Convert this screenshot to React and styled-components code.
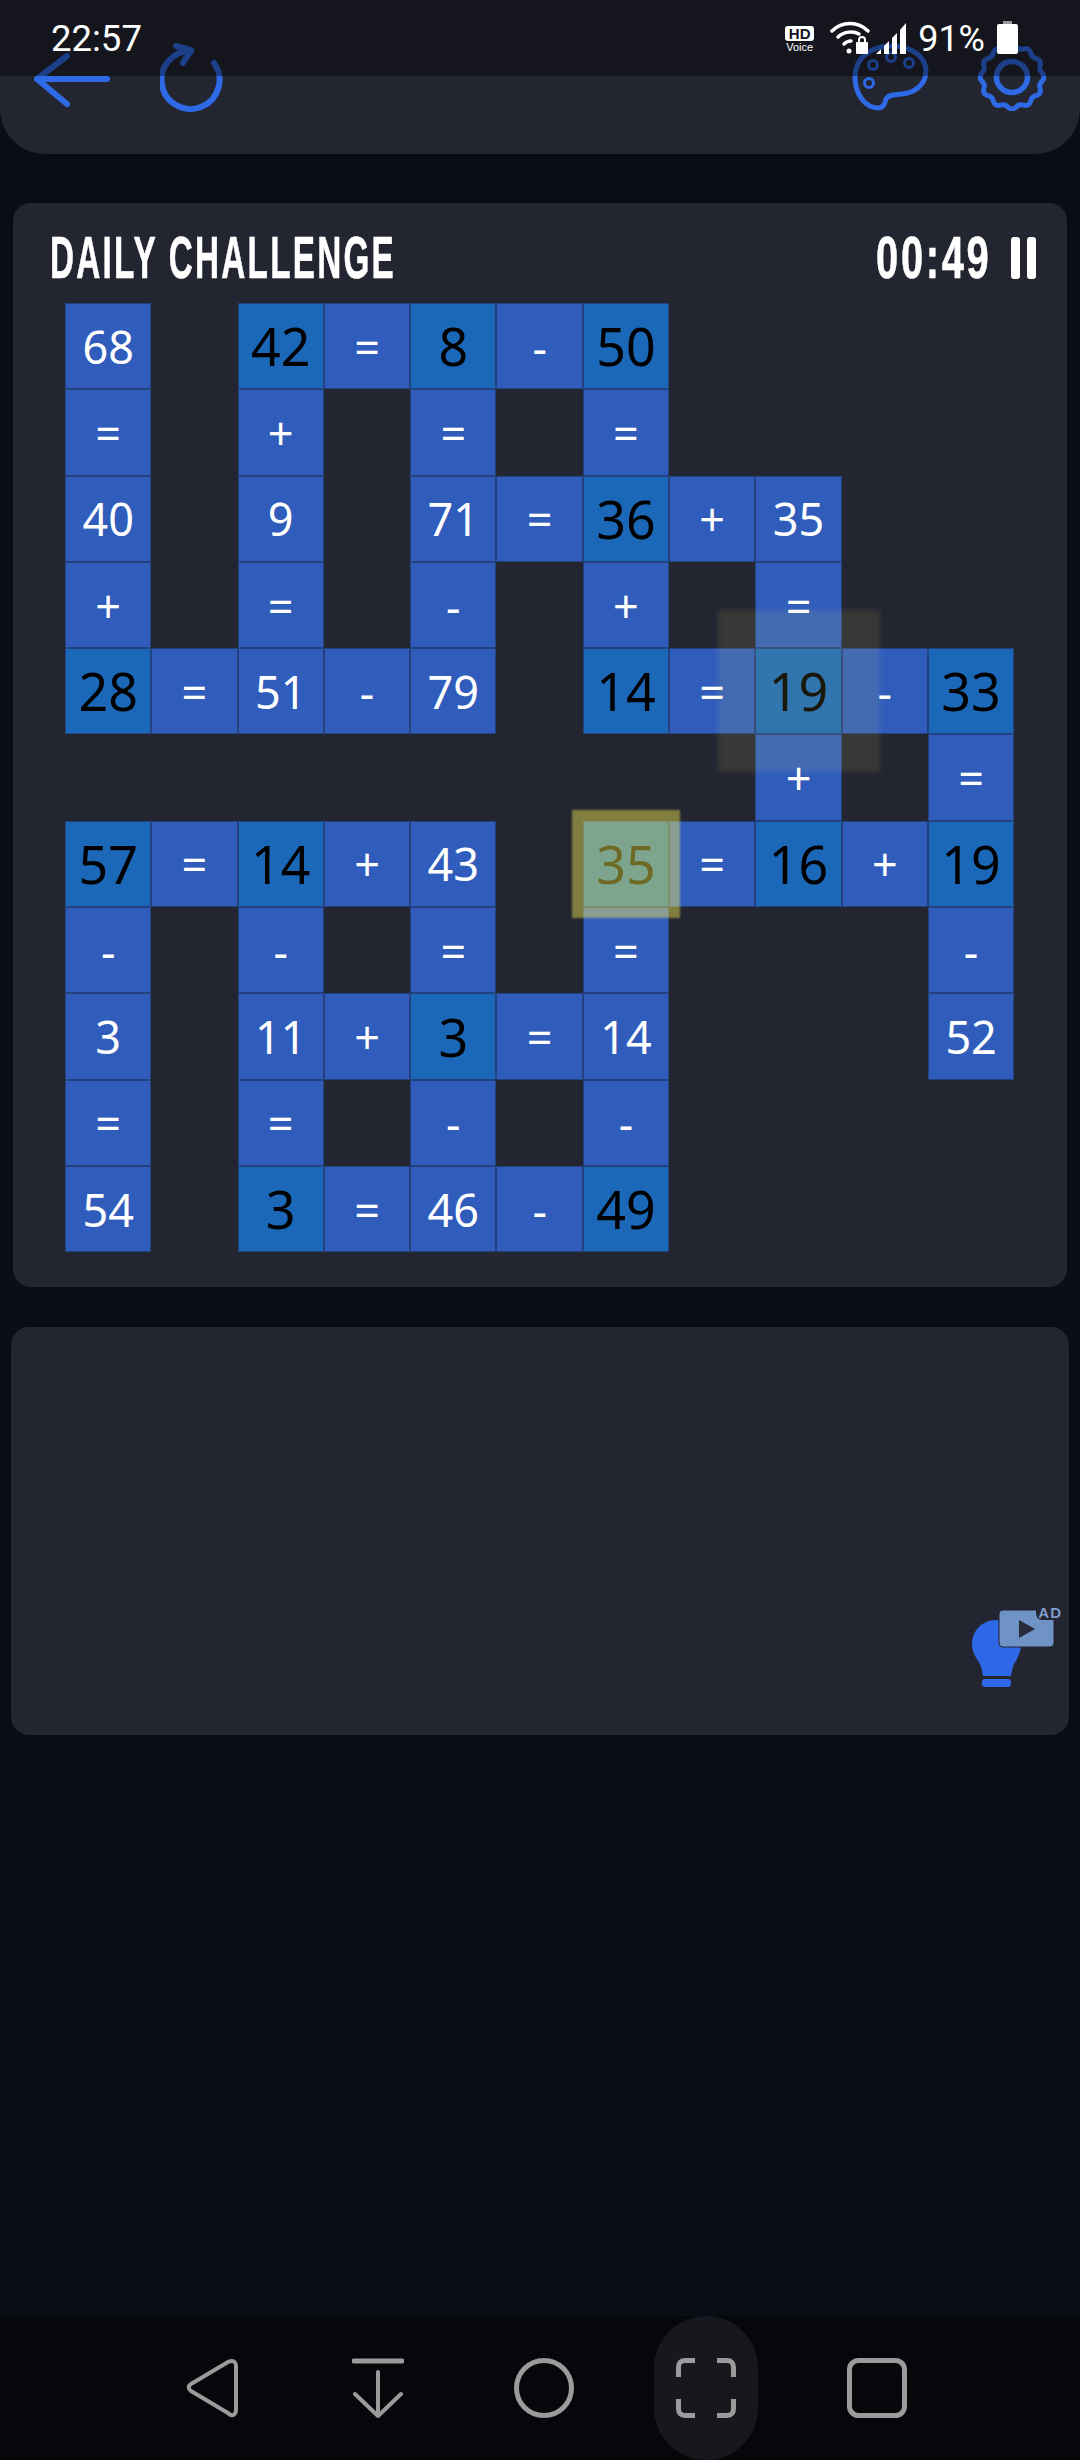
import React from 'react'
import styled, { createGlobalStyle } from 'styled-components'

const Global = createGlobalStyle`
  html, body { margin: 0; padding: 0; background: #0a0d15; }
`

const PITCH = 86.3

const board = [
  ['68', '', '42*', '=', '8*', '-', '50*', '', '', '', ''],
  ['=', '', '+', '', '=', '', '=', '', '', '', ''],
  ['40', '', '9', '', '71', '=', '36*', '+', '35', '', ''],
  ['+', '', '=', '', '-', '', '+', '', '=', '', ''],
  ['28*', '=', '51', '-', '79', '', '14*', '=', '19*', '-', '33*'],
  ['', '', '', '', '', '', '', '', '+', '', '='],
  ['57*', '=', '14*', '+', '43', '', '35*', '=', '16*', '+', '19*'],
  ['-', '', '-', '', '=', '', '=', '', '', '', '-'],
  ['3', '', '11', '+', '3*', '=', '14', '', '', '', '52'],
  ['=', '', '=', '', '-', '', '-', '', '', '', ''],
  ['54', '', '3*', '=', '46', '-', '49*', '', '', '', ''],
]

const Page = styled.div`
  position: relative;
  width: 1080px;
  height: 2460px;
  overflow: hidden;
  display: flex;
  flex-direction: column;
  background: #0a0d15;
  font-family: "Noto Sans", sans-serif;
`

const StatusBar = styled.div`
  position: absolute;
  top: 0;
  left: 0;
  right: 0;
  height: 76px;
  background: rgba(0, 0, 0, 0.4);
  display: flex;
  justify-content: space-between;
  padding: 0 62px 0 51px;
  box-sizing: border-box;
  color: #fff;
  font-family: Roboto, sans-serif;
`

const Clock = styled.div`
  font-size: 36.5px;
  line-height: 42px;
  margin-top: 18px;
`

const StatusRight = styled.div`
  display: flex;
  align-items: flex-start;
  padding-top: 21px;
`

const Battery = styled.div`
  font-size: 36px;
  line-height: 42px;
  margin: -3px 12px 0 9px;
`

const HdBadge = styled.div`
  width: 29px;
  margin: 5px 14px 0 0;
  display: flex;
  flex-direction: column;
  align-items: center;
`

const HdMark = styled.div`
  width: 29px;
  height: 15px;
  border-radius: 3px;
  background: #fff;
  color: #14151f;
  font: 700 15px/15px "Liberation Sans", sans-serif;
  text-align: center;
`

const VoiceMark = styled.div`
  font: 400 11px/12px "Liberation Sans", sans-serif;
  color: #fff;
`

const Header = styled.header`
  height: 154px;
  flex: none;
  box-sizing: border-box;
  padding: 43px 34px 0;
  display: flex;
  justify-content: space-between;
  background: #232531;
  border-radius: 0 0 45px 45px;
`

const IconGroup = styled.div`
  display: flex;
  align-items: flex-start;
  gap: ${p => p.$gap}px;
`

const BlueIcon = styled.svg`
  display: block;
  margin-top: ${p => p.$top || 0}px;
  fill: none;
  stroke: #2f6ae6;
  stroke-width: 6;
  stroke-linecap: round;
  stroke-linejoin: round;
`

const Panel = styled.section`
  background: #232531;
  border-radius: 18px;
  margin: ${p => p.$margin};
`

const GamePanel = styled(Panel)`
  height: 1084px;
  padding: 19px 31px 0 37px;
  box-sizing: border-box;
`

const TitleRow = styled.div`
  display: flex;
  justify-content: space-between;
  align-items: center;
  height: 81px;
  padding-bottom: 9px;
  box-sizing: border-box;
  color: #fff;
`

const Title = styled.h1`
  margin: 0;
  font: 700 60px/74px "Liberation Sans", sans-serif;
  letter-spacing: 4px;
  transform: scaleX(0.555);
  transform-origin: left center;
  white-space: nowrap;
  -webkit-text-stroke: 0.6px #fff;
`

const Timer = styled.div`
  display: flex;
  align-items: center;
  gap: 20px;
`

const TimeText = styled.div`
  font: 700 60px/74px "Liberation Sans", sans-serif;
  letter-spacing: 4px;
  transform: scaleX(0.665);
  transform-origin: right center;
  -webkit-text-stroke: 0.6px #fff;
`

const PauseIcon = styled.div`
  display: flex;
  gap: 7px;
`

const PauseBar = styled.span`
  width: 9px;
  height: 42px;
  border-radius: 3px;
  background: #fff;
`

const Board = styled.div`
  position: relative;
  display: grid;
  grid-template-columns: repeat(11, ${PITCH}px);
  grid-auto-rows: ${PITCH}px;
  margin: 0 0 0 15px;
`

const Cell = styled.div`
  box-sizing: border-box;
  display: flex;
  align-items: center;
  justify-content: center;
  border: 1px solid #23407f;
  background: ${p => (p.$dark ? '#1b68b8' : '#305cbc')};
  color: ${p => (p.$dark ? '#000' : '#fff')};
  font-size: ${p => (p.$dark ? 52 : 45)}px;
  line-height: 1;
`

const Glow = styled.div`
  position: absolute;
  pointer-events: none;
  left: ${p => p.$left}px;
  top: ${p => p.$top}px;
  width: ${p => p.$size}px;
  height: ${p => p.$size}px;
  background: ${p => p.$color};
  filter: blur(${p => p.$blur}px);
`

const HintPanel = styled(Panel)`
  height: 408px;
  display: flex;
  justify-content: flex-end;
  align-items: flex-start;
  padding: 282px 11px 0 0;
  box-sizing: border-box;
`

const HintButton = styled.div`
  position: relative;
  width: 87px;
  height: 81px;
`

const AdLabel = styled.span`
  position: absolute;
  right: -5px;
  top: -4px;
  padding: 0 1px 0 2px;
  background: #232531;
  border-radius: 0 0 0 6px;
  color: #7f9dca;
  font: 700 15px/15px "Liberation Sans", sans-serif;
  letter-spacing: 1px;
`

const NavBar = styled.nav`
  margin-top: auto;
  height: 144px;
  flex: none;
  background: #05070b;
  display: flex;
  align-items: center;
  padding-left: 186px;
`

const NavIcon = styled.svg`
  display: block;
  flex: none;
  margin-left: ${p => p.$gap || 0}px;
  fill: none;
  stroke: #9b9b9b;
  stroke-width: 4;
  stroke-linecap: round;
  stroke-linejoin: round;
`

const NavPill = styled.div`
  flex: none;
  width: 104px;
  height: 144px;
  margin-left: ${p => p.$gap}px;
  margin-right: 89px;
  border-radius: 52px;
  background: #17181d;
  display: flex;
  align-items: center;
  justify-content: center;
`

const gearPath = () => {
  let d = ''
  for (let i = 0; i <= 180; i++) {
    const a = (i / 180) * Math.PI * 2
    const r = 30.5 + 1.6 * Math.cos(a * 12)
    d += `${i ? 'L' : 'M'}${(34 + r * Math.cos(a)).toFixed(2)} ${(34 + r * Math.sin(a)).toFixed(2)}`
  }
  return d + 'Z'
}

const App = () => {
  return (
    <Page>
      <Global />
      <Header>
        <IconGroup $gap={50}>
          <BlueIcon $top={9} width="76" height="56" viewBox="0 0 76 56">
            <path d="M3 27H73M3 27L33 4M3 27L33 52" />
          </BlueIcon>
          <BlueIcon width="64" height="70" viewBox="0 0 64 70">
            <path d="M54 20A29 29 0 1 1 31 8" />
            <path d="M16 3L31 7L23 20" />
          </BlueIcon>
        </IconGroup>
        <IconGroup $gap={48}>
          <BlueIcon width="78" height="68" viewBox="0 0 78 68">
            <path d="M3 34C3 14 20 3 39 3C60 3 74 14 74 28C74 42 62 50 50 51C44 52 37 51 34 56C33 60 32 65 26 65C14 65 3 52 3 34Z" strokeWidth="5" />
            <circle cx="21" cy="22" r="4.5" strokeWidth="3" />
            <circle cx="39" cy="14" r="4.5" strokeWidth="3" />
            <circle cx="57" cy="20" r="4.5" strokeWidth="3" />
            <circle cx="17" cy="40" r="4.5" strokeWidth="3" />
          </BlueIcon>
          <BlueIcon width="68" height="68" viewBox="0 0 68 68">
            <path d={gearPath()} strokeWidth="5" />
            <circle cx="34" cy="34" r="15.5" strokeWidth="5.5" />
          </BlueIcon>
        </IconGroup>
      </Header>

      <GamePanel $margin="49px 13px 0">
        <TitleRow>
          <Title>DAILY CHALLENGE</Title>
          <Timer>
            <TimeText>00:49</TimeText>
            <PauseIcon>
              <PauseBar />
              <PauseBar />
            </PauseIcon>
          </Timer>
        </TitleRow>
        <Board>
          {board.flat().map((v, i) =>
            v === '' ? (
              <div key={i} />
            ) : (
              <Cell key={i} $dark={v.endsWith('*')}>
                {v.replace('*', '')}
              </Cell>
            )
          )}
          <Glow $left={653} $top={307} $size={162} $blur={2.5} $color="rgba(245, 237, 100, 0.1)" />
          <Glow $left={507} $top={507} $size={108} $blur={1} $color="rgba(255, 245, 85, 0.43)" />
        </Board>
      </GamePanel>

      <HintPanel $margin="40px 11px 0">
        <HintButton>
          <svg width="87" height="81" viewBox="0 0 87 81">
            <path d="M25 11C11 11 1 22 1 35C1 44 6 50 9 55C11 59 11 63 12 67H40C41 63 41 59 43 55C46 50 50 44 50 35C50 22 39 11 25 11Z" fill="#2f68e6" />
            <rect x="11" y="70" width="29" height="8" rx="3" fill="#2f68e6" />
            <rect x="28" y="1" width="55" height="37" rx="4" fill="#6f93c4" stroke="#232531" strokeWidth="1" />
            <path d="M48 11L48 29L64 20Z" fill="#272b3a" />
          </svg>
          <AdLabel>AD</AdLabel>
        </HintButton>
      </HintPanel>

      <NavBar>
        <NavIcon width="52" height="60" viewBox="0 0 52 60">
          <path d="M46 3C48 3 50 5 50 8V52C50 55 48 58 45 57C44 57 43 56 42 55L5 33C2 31 2 28 5 26L42 4C43 3 45 3 46 3Z" />
        </NavIcon>
        <NavIcon $gap={114} width="52" height="60" viewBox="0 0 52 60">
          <path d="M2 3H50" strokeWidth="5" />
          <path d="M26 14V58M3 36L26 58L49 36" />
        </NavIcon>
        <NavIcon $gap={110} width="60" height="60" viewBox="0 0 60 60">
          <circle cx="30" cy="30" r="27.5" strokeWidth="5" />
        </NavIcon>
        <NavPill $gap={80}>
          <svg width="60" height="60" viewBox="0 0 60 60" fill="none" stroke="#9b9b9b" strokeWidth="5">
            <path d="M2.5 19V9C2.5 5 5 2.5 9 2.5H19M41 2.5H51C55 2.5 57.5 5 57.5 9V19M2.5 41V51C2.5 55 5 57.5 9 57.5H19M41 57.5H51C55 57.5 57.5 55 57.5 51V41" />
          </svg>
        </NavPill>
        <NavIcon width="60" height="60" viewBox="0 0 60 60">
          <rect x="2.5" y="2.5" width="55" height="55" rx="9" strokeWidth="5" />
        </NavIcon>
      </NavBar>

      <StatusBar>
        <Clock>22:57</Clock>
        <StatusRight>
          <HdBadge>
            <HdMark>HD</HdMark>
            <VoiceMark>Voice</VoiceMark>
          </HdBadge>
          <svg width="40" height="33" viewBox="0 0 40 33" fill="none" stroke="#fff" strokeWidth="3.5" strokeLinecap="round" style={{ marginLeft: 2 }}>
            <path d="M2 10C12 0 28 0 38 10" />
            <path d="M8 16C14 10 24 10 29 13" />
            <path d="M14 23C16 21 18 20 21 20" />
            <circle cx="19" cy="30" r="2.5" fill="#fff" stroke="none" />
            <rect x="26" y="21" width="12" height="12" rx="1" fill="#fff" stroke="none" />
            <path d="M29 21V19C29 15 35 15 35 19V21" strokeWidth="2" />
          </svg>
          <svg width="34" height="33" viewBox="0 0 34 33" fill="#fff" style={{ marginLeft: 5 }}>
            <path d="M1 33L6 28V33ZM9 33V25L14 20V33ZM17 33V17L22 12V33ZM25 33V9L31 2V33Z" />
          </svg>
          <Battery>91%</Battery>
          <svg width="21" height="33" viewBox="0 0 21 33" fill="#fff">
            <rect x="0" y="3" width="21" height="30" rx="2" />
            <rect x="6" y="0" width="9" height="3" fill="#9a9a9a" />
          </svg>
        </StatusRight>
      </StatusBar>
    </Page>
  )
}

export default App
